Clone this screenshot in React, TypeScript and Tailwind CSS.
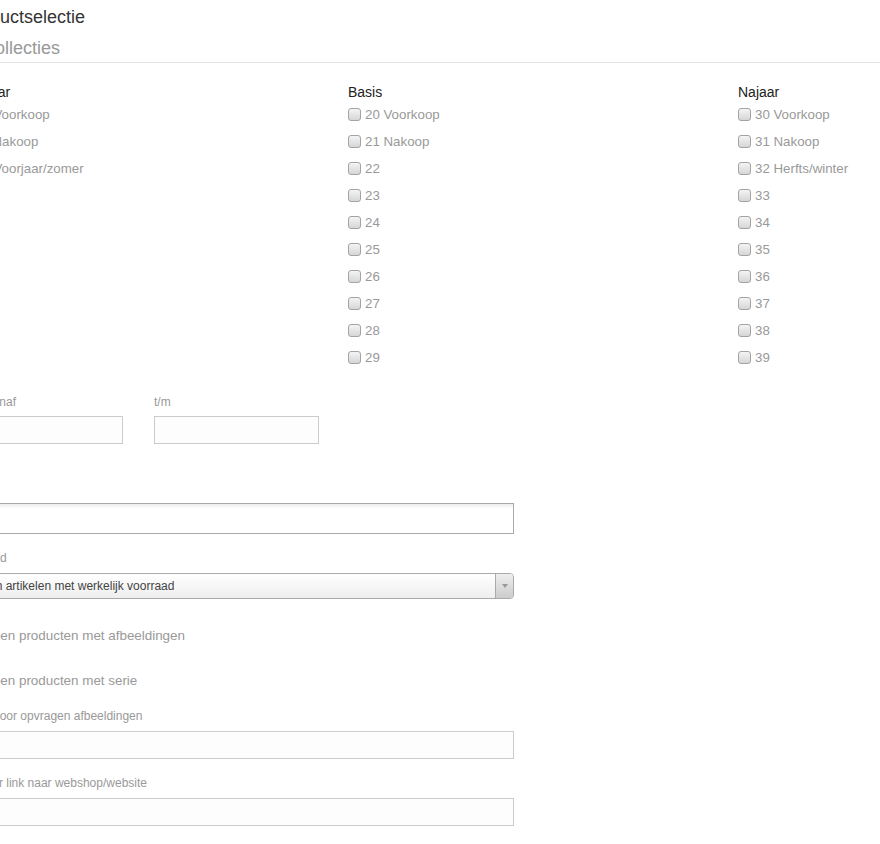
import React from "react"

const voorjaar = ["10 Voorkoop", "11 Nakoop", "12 Voorjaar/zomer"]
const basis = ["20 Voorkoop", "21 Nakoop", "22", "23", "24", "25", "26", "27", "28", "29"]
const najaar = ["30 Voorkoop", "31 Nakoop", "32 Herfts/winter", "33", "34", "35", "36", "37", "38", "39"]

function Box() {
  return (
    <input
      type="checkbox"
      className="appearance-none m-0 w-[13px] h-[13px] shrink-0 border border-[#a3a3a3] rounded-[3px] bg-linear-to-b from-[#f4f4f4] to-[#d6d6d6]"
    />
  )
}

function CheckRow({ label }: { label: string }) {
  return (
    <label className="flex items-center h-[27px] gap-[4px] text-[13.3px] text-[#999] whitespace-nowrap">
      <Box />
      <span>{label}</span>
    </label>
  )
}

function Column({ title, items }: { title: string; items: string[] }) {
  return (
    <div>
      <div className="h-[18px] leading-[18px] text-[14px] text-[#222] whitespace-nowrap">{title}</div>
      {items.map((item) => (
        <CheckRow key={item} label={item} />
      ))}
    </div>
  )
}

function FieldLabel({ children, className = "" }: { children: React.ReactNode; className?: string }) {
  return <div className={`h-[14px] leading-[14px] text-[12px] text-[#999] whitespace-nowrap ${className}`}>{children}</div>
}

export default function App() {
  return (
    <div className="w-[880px] min-h-[844px] overflow-hidden bg-white font-['Liberation_Sans',Arial,sans-serif]">
      <div className="-ml-[42px] w-[1170px]">
        <div className="pt-[7px] ml-[4px] h-[20px] leading-[20px] text-[18px] text-[#333]">Productselectie</div>

        <div className="mt-[18px] border-b border-[#e5e5e5] pb-[4px]">
          <div className="ml-[24px] h-[20px] leading-[20px] text-[18px] text-[#999]">Collecties</div>
        </div>

        <div className="mt-[20px] grid grid-cols-[390px_390px_390px]">
          <Column title="Voorjaar" items={voorjaar} />
          <Column title="Basis" items={basis} />
          <Column title="Najaar" items={najaar} />
        </div>

        <div className="mt-[24px] flex gap-[31px]">
          <div>
            <FieldLabel className="ml-[2px]">Prijs vanaf</FieldLabel>
            <input type="text" className="mt-[7px] block w-[165px] h-[28px] border border-[#ccc] bg-[#fdfdfd] outline-none" />
          </div>
          <div>
            <FieldLabel>t/m</FieldLabel>
            <input type="text" className="mt-[7px] block w-[165px] h-[28px] border border-[#ccc] bg-[#fdfdfd] outline-none" />
          </div>
        </div>

        <div className="mt-[37px]">
          <FieldLabel>Merk</FieldLabel>
          <div className="mt-[8px] w-[556px] h-[31px] border border-[#aaa] bg-[linear-gradient(to_bottom,#eee_1%,#fff_15%)]" />
        </div>

        <div className="mt-[17px]">
          <FieldLabel>Voorraad</FieldLabel>
          <div className="mt-[8px] flex w-[556px] h-[26px] border border-[#aaa] rounded-[4px] bg-linear-to-b from-white to-[#eee] overflow-hidden">
            <div className="flex-1 pl-[10px] leading-[24px] text-[12px] text-[#444] whitespace-nowrap">
              Alleen artikelen met werkelijk voorraad
            </div>
            <div className="w-[18px] flex items-center justify-center border-l border-[#aaa] bg-linear-to-b from-[#eee] to-[#ccc]">
              <svg width="6" height="4" viewBox="0 0 6 4">
                <path d="M0 0h6L3 4z" fill="#999" />
              </svg>
            </div>
          </div>
        </div>

        <label className="mt-[29px] flex items-center gap-[7px] h-[16px] text-[13.4px] text-[#999] whitespace-nowrap">
          <Box />
          <span>Alleen producten met afbeeldingen</span>
        </label>

        <label className="mt-[29px] flex items-center gap-[7px] h-[16px] text-[13.4px] text-[#999] whitespace-nowrap">
          <Box />
          <span>Alleen producten met serie</span>
        </label>

        <div className="mt-[20px]">
          <FieldLabel className="ml-[1px]">Adres voor opvragen afbeeldingen</FieldLabel>
          <input type="text" className="mt-[8px] block w-[556px] h-[28px] border border-[#ccc] bg-[#fdfdfd] outline-none" />
        </div>

        <div className="mt-[17px]">
          <FieldLabel className="-ml-[4px]">Titel voor link naar webshop/website</FieldLabel>
          <input type="text" className="mt-[8px] block w-[556px] h-[28px] border border-[#ccc] bg-[#fdfdfd] outline-none" />
        </div>
      </div>
    </div>
  )
}
